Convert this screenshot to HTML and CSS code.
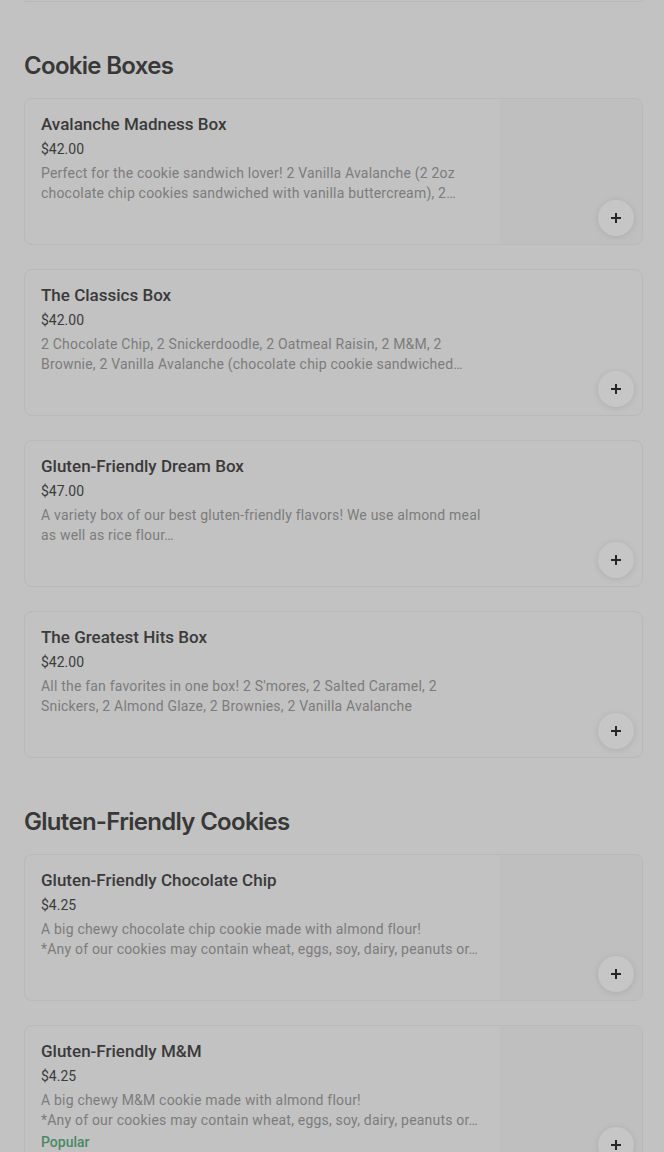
FILE: index.html
```html
<!DOCTYPE html>
<html lang="en">
<head>
  <meta charset="UTF-8" />
  <meta name="viewport" content="width=device-width, initial-scale=1" />
  <title>Menu</title>
  <link rel="stylesheet" href="styles.css">
</head>
<body>
  <div class="menu">
    <div class="card-tail"></div>

    <section class="section">
      <h2 class="section-title">Cookie Boxes</h2>
      <div class="items">
        <div class="card">
          <div class="card-info">
            <div class="item-name">Avalanche Madness Box</div>
            <div class="item-price">$42.00</div>
            <div class="item-desc">Perfect for the cookie sandwich lover! 2 Vanilla Avalanche (2 2oz chocolate chip cookies sandwiched with vanilla buttercream), 2…</div>
          </div>
          <div class="card-img"></div>
          <button class="add-btn"><svg viewBox="0 0 12 12" width="12" height="12"><path d="M6 1v10M1 6h10" stroke="#262626" stroke-width="2"/></svg></button>
        </div>

        <div class="card">
          <div class="card-info">
            <div class="item-name">The Classics Box</div>
            <div class="item-price">$42.00</div>
            <div class="item-desc">2 Chocolate Chip, 2 Snickerdoodle, 2 Oatmeal Raisin, 2 M&amp;M, 2 Brownie, 2 Vanilla Avalanche (chocolate chip cookie sandwiched…</div>
          </div>
          <button class="add-btn"><svg viewBox="0 0 12 12" width="12" height="12"><path d="M6 1v10M1 6h10" stroke="#262626" stroke-width="2"/></svg></button>
        </div>

        <div class="card">
          <div class="card-info">
            <div class="item-name">Gluten-Friendly Dream Box</div>
            <div class="item-price">$47.00</div>
            <div class="item-desc">A variety box of our best gluten-friendly flavors! We use almond meal as well as rice flour…</div>
          </div>
          <button class="add-btn"><svg viewBox="0 0 12 12" width="12" height="12"><path d="M6 1v10M1 6h10" stroke="#262626" stroke-width="2"/></svg></button>
        </div>

        <div class="card">
          <div class="card-info">
            <div class="item-name">The Greatest Hits Box</div>
            <div class="item-price">$42.00</div>
            <div class="item-desc">All the fan favorites in one box! 2 S'mores, 2 Salted Caramel, 2 Snickers, 2 Almond Glaze, 2 Brownies, 2 Vanilla Avalanche</div>
          </div>
          <button class="add-btn"><svg viewBox="0 0 12 12" width="12" height="12"><path d="M6 1v10M1 6h10" stroke="#262626" stroke-width="2"/></svg></button>
        </div>
      </div>
    </section>

    <section class="section">
      <h2 class="section-title">Gluten-Friendly Cookies</h2>
      <div class="items">
        <div class="card">
          <div class="card-info">
            <div class="item-name">Gluten-Friendly Chocolate Chip</div>
            <div class="item-price">$4.25</div>
            <div class="item-desc">A big chewy chocolate chip cookie made with almond flour!
*Any of our cookies may contain wheat, eggs, soy, dairy, peanuts or…</div>
          </div>
          <div class="card-img"></div>
          <button class="add-btn"><svg viewBox="0 0 12 12" width="12" height="12"><path d="M6 1v10M1 6h10" stroke="#262626" stroke-width="2"/></svg></button>
        </div>

        <div class="card">
          <div class="card-info">
            <div class="item-name">Gluten-Friendly M&amp;M</div>
            <div class="item-price">$4.25</div>
            <div class="item-desc">A big chewy M&amp;M cookie made with almond flour!
*Any of our cookies may contain wheat, eggs, soy, dairy, peanuts or…</div>
            <div class="item-tag">Popular</div>
          </div>
          <div class="card-img"></div>
          <button class="add-btn"><svg viewBox="0 0 12 12" width="12" height="12"><path d="M6 1v10M1 6h10" stroke="#262626" stroke-width="2"/></svg></button>
        </div>
      </div>
    </section>
  </div>
</body>
</html>
```

FILE: styles.css
```css
body {
  margin: 0;
  padding: 0;
  background: #c2c2c2;
  color: #333;
  font-family: Roboto, "Noto Sans", sans-serif;
  overflow: hidden;
}
.menu {
  padding: 0 21px 0 24px;
}
.card-tail {
  height: 1px;
  border: 1px solid #b8b8b8;
  border-top: none;
  border-radius: 0 0 8px 8px;
}
.section {
  margin-top: 48px;
}
.section-title {
  margin: 0 0 16px;
  font-family: Inter, "Noto Sans", sans-serif;
  font-size: 24px;
  line-height: 32px;
  font-weight: 600;
  letter-spacing: -0.7px;
  color: #383838;
}
.items {
  display: flex;
  flex-direction: column;
  gap: 24px;
}
.card {
  position: relative;
  display: flex;
  min-height: 147px;
  border: 1px solid #b9b9b9;
  border-radius: 8px;
  box-sizing: border-box;
  overflow: hidden;
}
.card-info {
  width: 475px;
  flex-shrink: 0;
  box-sizing: border-box;
  padding: 13px 16px 12px;
}
.item-name {
  font-size: 17px;
  line-height: 24px;
  font-weight: 500;
  color: #3a3a3a;
}
.item-price {
  margin-top: 1px;
  font-size: 14px;
  line-height: 24px;
  color: #3c3c3c;
}
.item-desc {
  margin-top: 2px;
  font-size: 14px;
  line-height: 20px;
  letter-spacing: 0.2px;
  color: #7c7c7c;
  white-space: pre-line;
  display: -webkit-box;
  -webkit-line-clamp: 2;
  -webkit-box-orient: vertical;
  overflow: hidden;
}
.item-tag {
  margin-top: 2px;
  font-size: 14px;
  line-height: 20px;
  font-weight: 500;
  color: #4b8866;
}
.card-img {
  flex: 1;
  background: #bfbfbf;
}
.add-btn {
  position: absolute;
  right: 8px;
  bottom: 8px;
  width: 36px;
  height: 36px;
  border: none;
  border-radius: 50%;
  background: #c6c6c6;
  box-shadow: 0 1px 6px rgba(0, 0, 0, 0.1);
  padding: 0;
  display: flex;
  align-items: center;
  justify-content: center;
  cursor: pointer;
}
```
